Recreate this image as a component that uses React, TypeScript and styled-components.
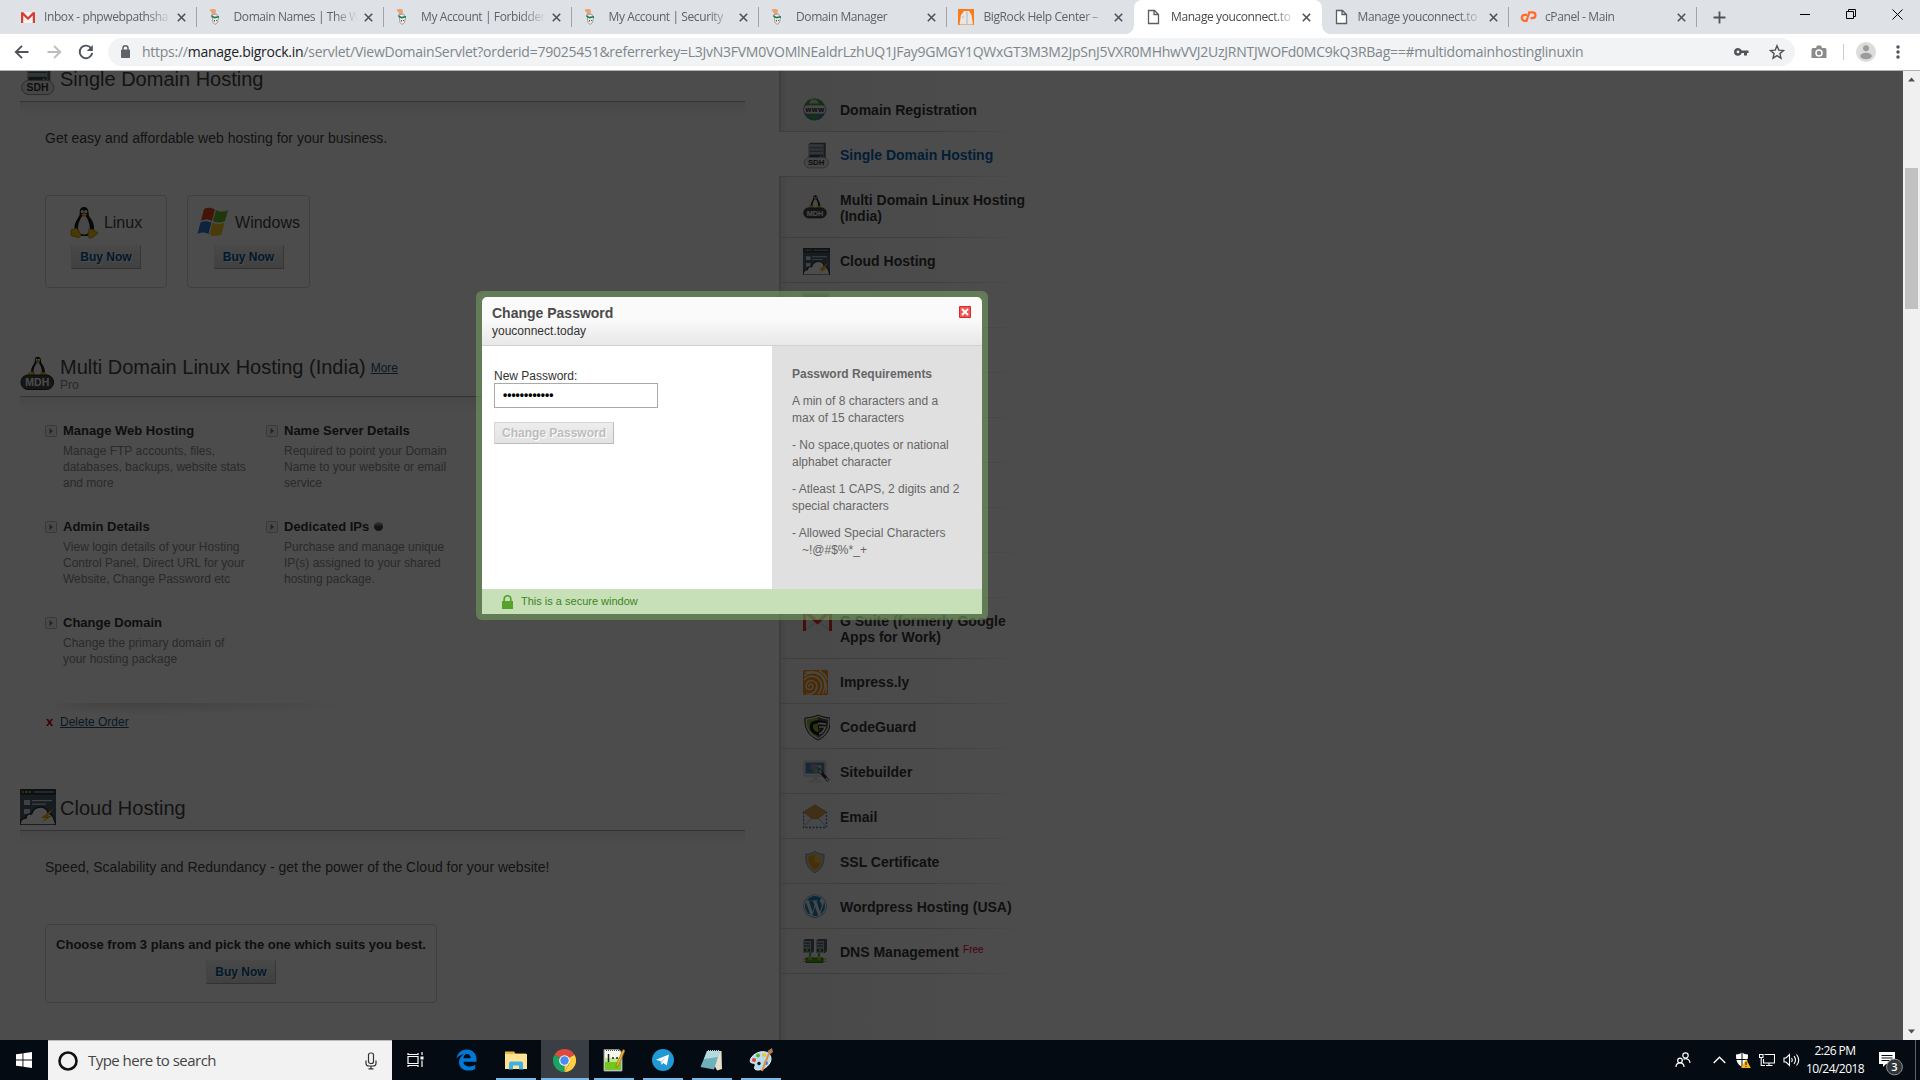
import React from "react";
import styled, { createGlobalStyle, css } from "styled-components";
import { FaWordpress } from "react-icons/fa";

const ARIAL = `"Liberation Sans", Arial, sans-serif`;
const SEGOE = `"Open Sans", "Noto Sans", sans-serif`;

const GlobalStyle = createGlobalStyle`
  * { box-sizing: border-box; }
  body { margin: 0; overflow: hidden; font-family: ${ARIAL}; }
  p, h1, h2, h3 { margin: 0; font-weight: normal; }
  svg { display: block; flex: none; }
`;

const Screen = styled.div`
  position: relative;
  display: flex;
  flex-direction: column;
  width: 1920px;
  height: 1080px;
  overflow: hidden;
  background: #fff;
`;

/* ---------- browser chrome ---------- */
const TabStrip = styled.div`
  display: flex;
  height: 34px;
  padding-left: 9px;
  background: #dee1e6;
  font: 12px ${SEGOE};
  color: #5f6368;
`;

const Tab = styled.div<{ $active?: boolean; $line?: boolean }>`
  position: relative;
  display: flex;
  align-items: center;
  width: 187.5px;
  height: 34px;
  padding: 0 11px 0 11px;
  ${(p) =>
    p.$line &&
    css`
      background: linear-gradient(#a0a3a8, #a0a3a8) right 7px / 1px 20px no-repeat;
    `}
  ${(p) =>
    p.$active &&
    css`
      background: #fff;
      color: #45494d;
      border-radius: 8px 8px 0 0;
      &::before,
      &::after {
        content: "";
        position: absolute;
        bottom: 0;
        width: 8px;
        height: 8px;
      }
      &::before {
        left: -8px;
        background: radial-gradient(circle at 0 0, transparent 7.5px, #fff 8px);
      }
      &::after {
        right: -8px;
        background: radial-gradient(circle at 100% 0, transparent 7.5px, #fff 8px);
      }
    `}
`;

const TabLabel = styled.span<{ $ml: number }>`
  flex: 1;
  min-width: 0;
  margin: 0 6px 0 ${(p) => p.$ml}px;
  line-height: 34px;
  white-space: nowrap;
  letter-spacing: -0.4px;
  mask-image: linear-gradient(90deg, #000 calc(100% - 24px), transparent);
`;

const NewTab = styled.div`
  display: flex;
  align-items: center;
  width: 64px;
  padding-left: 16px;
`;

const WindowButtons = styled.div`
  display: flex;
  margin-left: auto;
`;

const WindowButton = styled.div`
  display: flex;
  justify-content: center;
  width: 46px;
  padding-top: 9px;
`;

const Toolbar = styled.div`
  display: flex;
  align-items: center;
  height: 37px;
  padding: 0 10px 1px 10px;
  border-bottom: 1px solid #b1b4b1;
  background: #fff;
`;

const NavIcons = styled.div`
  display: flex;
  gap: 8px;
  width: 98px;
`;

const Omnibox = styled.div`
  display: flex;
  align-items: center;
  width: 1687px;
  height: 28px;
  padding: 0 10px 0 11px;
  border-radius: 14px;
  background: #f1f3f4;
`;

const Url = styled.div`
  flex: 1;
  margin-left: 10px;
  font: 14px/28px ${SEGOE};
  letter-spacing: -0.255px;
  color: #80868b;
  white-space: nowrap;
  b {
    font-weight: normal;
    color: #202124;
  }
`;

const OmniActions = styled.div`
  display: flex;
  gap: 20px;
`;

const ToolbarActions = styled.div`
  display: flex;
  align-items: center;
  margin-left: auto;
`;

const ToolbarDivider = styled.div`
  width: 1px;
  height: 16px;
  margin: 0 12px 0 16px;
  background: #c8cacc;
`;

/* ---------- page ---------- */
const Viewport = styled.div`
  display: flex;
  height: 969px;
`;

const Page = styled.div`
  position: relative;
  display: flex;
  width: 1903px;
  overflow: hidden;
  background: #fff;
`;

const Shade = styled.div`
  position: absolute;
  inset: 0;
  background: rgba(0, 0, 0, 0.7);
`;

const Main = styled.main`
  width: 779px;
  padding: 0 34px 0 20px;
  color: #444;
`;

const SectionHead = styled.header<{ $mt: number }>`
  display: flex;
  gap: 4px;
  height: 42px;
  margin-top: ${(p) => p.$mt}px;
  border-bottom: 1px solid #aaa;
`;

const HeadShadow = styled.div`
  height: 15px;
  background: linear-gradient(#eee, #fff);
`;

const HeadText = styled.div<{ $pt: number }>`
  padding-top: ${(p) => p.$pt}px;
  white-space: nowrap;
`;

const Heading = styled.h2`
  font-size: 20px;
  line-height: 24px;
  color: #444;
`;

const More = styled.a`
  margin-left: 5px;
  font-size: 12px;
  line-height: 12px;
  color: #1d5579;
  text-decoration: underline;
  vertical-align: 2px;
`;

const Plan = styled.div`
  margin-top: -2px;
  font-size: 12px;
  line-height: 16px;
  color: #888;
`;

const Intro = styled.p`
  margin: 12px 0 48px 25px;
  font-size: 14px;
  line-height: 18px;
`;

const Cards = styled.div`
  display: flex;
  gap: 20px;
  margin-left: 25px;
`;

const Card = styled.div<{ $w: number; $h: number }>`
  display: flex;
  flex-direction: column;
  align-items: center;
  width: ${(p) => p.$w}px;
  height: ${(p) => p.$h}px;
  padding-top: 9px;
  border: 1px solid #d4d4d4;
  border-radius: 4px;
`;

const Os = styled.div`
  display: flex;
  align-items: center;
  gap: 6px;
  height: 33px;
  margin-bottom: 7px;
  padding-top: 3px;
  font-size: 16px;
  svg {
    margin-top: -2px;
  }
`;

const CardText = styled.div`
  height: 26px;
  padding-top: 2px;
  font-size: 13px;
  line-height: 18px;
  font-weight: bold;
  color: #333;
  white-space: nowrap;
`;

const BuyButton = styled.div`
  width: 70px;
  height: 24px;
  border: 1px solid;
  border-color: #f4f4f4 #b5b5b5 #a8a8a8 #e4e4e4;
  background: linear-gradient(#f3f3f3, #d9d9d9);
  color: #065590;
  font-size: 12px;
  font-weight: bold;
  line-height: 22px;
  text-align: center;
  text-shadow: 1px 1px 0 #fff;
`;

const Features = styled.div`
  display: grid;
  grid-template-columns: 221px 221px;
  grid-template-rows: 96px 96px 88px;
  margin: 11px 0 0 25px;
`;

const Feature = styled.div`
  display: flex;
  gap: 6px;
`;

const Arrow = styled.svg`
  margin-top: 2px;
`;

const FeatureTitle = styled.h3`
  display: flex;
  align-items: center;
  gap: 5px;
  margin-bottom: 4px;
  font-size: 13px;
  line-height: 16px;
  font-weight: bold;
  color: #333;
`;

const FeatureText = styled.p`
  font-size: 12px;
  line-height: 16px;
  color: #8c8c8c;
  white-space: pre-line;
`;

const Dot = styled.span`
  width: 9px;
  height: 9px;
  margin-top: -2px;
  border-radius: 50%;
  background: linear-gradient(#bbb, #444 55%);
`;

const FadeRule = styled.div`
  width: 300px;
  height: 11px;
  margin-left: 25px;
  background: radial-gradient(ellipse at 32% 0, #dedede, #fff 75%);
  mask-image: linear-gradient(90deg, transparent, #000 15%);
`;

const DeleteRow = styled.div`
  display: flex;
  gap: 7px;
  margin-left: 26px;
  font-size: 12px;
  line-height: 16px;
  a {
    color: #1d5579;
    text-decoration: underline;
  }
  b {
    width: 7px;
    color: #d00000;
    font-size: 13px;
  }
`;

/* ---------- product sidebar ---------- */
const Sidebar = styled.aside`
  width: 262px;
  background: linear-gradient(90deg, #c8c8c8 0, #e9e9e9 3px, #f3f3f3 8px, #fafafa 100px, #fff 245px);
`;

const SidebarTop = styled.div`
  height: 16px;
`;

const Item = styled.div<{ $h: number; $active?: boolean }>`
  display: flex;
  gap: 10px;
  height: ${(p) => p.$h}px;
  padding: 15px 0 0 24px;
  font-size: 14px;
  line-height: 16px;
  font-weight: bold;
  white-space: pre-line;
  color: ${(p) => (p.$active ? "#0765b0" : "#383838")};
  background:
    linear-gradient(90deg, #cfcfcf 60%, rgba(255, 255, 255, 0)) 0 100% / 245px 1px no-repeat,
    ${(p) => (p.$active ? "#fff" : "transparent")};
  sup {
    margin-left: 4px;
    font-size: 10px;
    line-height: 1px;
    font-weight: normal;
    color: #f00030;
    vertical-align: 4px;
  }
`;

const ItemIcon = styled.div<{ $drop?: number }>`
  width: 27px;
  height: 27px;
  margin-top: ${(p) => -5 + (p.$drop || 0)}px;
`;

/* ---------- scrollbar ---------- */
const Scrollbar = styled.div`
  display: flex;
  flex-direction: column;
  align-items: center;
  justify-content: space-between;
  width: 17px;
  padding: 6px 0;
  background: #f0f0f0;
`;

const Thumb = styled.div`
  width: 13px;
  height: 141px;
  margin: 86px 0 auto;
  background: #c1c1c1;
`;

/* ---------- dialog ---------- */
const Dialog = styled.div`
  position: absolute;
  left: 476px;
  top: 220px;
  width: 512px;
  height: 329px;
  padding: 6px;
  border-radius: 6px;
  background: rgba(115, 152, 95, 0.62);
`;

const DialogHead = styled.div`
  display: flex;
  justify-content: space-between;
  height: 49px;
  padding: 9px 11px 0 10px;
  border-radius: 5px 5px 0 0;
  border-bottom: 1px solid #d2d2d2;
  background: linear-gradient(#fafafa 45%, #e8e8e8);
  color: #333;
`;

const DialogTitle = styled.h1`
  margin-top: -1px;
  font-size: 14px;
  line-height: 16px;
  font-weight: bold;
  color: #4a4a4a;
  height: 18px;
`;

const DialogSub = styled.div`
  font-size: 12px;
  line-height: 16px;
`;

const DialogBody = styled.div`
  display: flex;
  height: 243px;
  background: #fff;
`;

const Form = styled.div`
  width: 290px;
  padding: 22px 0 0 12px;
  font-size: 12px;
  line-height: 16px;
  color: #333;
`;

const PasswordInput = styled.input`
  display: block;
  width: 164px;
  height: 25px;
  margin-top: -1px;
  padding: 0 8px 2px;
  border: 1px solid #aaa;
  outline: none;
  background: #fff;
  color: #000;
  font: bold 12px ${ARIAL};
`;

const SubmitButton = styled.div`
  width: 120px;
  height: 22px;
  margin-top: 14px;
  border: 1px solid;
  border-color: #d6d6d6 #bcbcbc #bcbcbc #d6d6d6;
  background: linear-gradient(#ededed, #e2e2e2);
  color: #bdbdbd;
  font-weight: bold;
  line-height: 20px;
  text-align: center;
  text-shadow: 1px 1px 0 #fff;
`;

const Rules = styled.div`
  width: 210px;
  padding: 20px 0 0 20px;
  background: #e0e0e0;
  font-size: 12px;
  line-height: 17px;
  color: #666;
  white-space: pre;
`;

const RulesTitle = styled.div`
  margin-bottom: 10px;
  font-weight: bold;
`;

const Rule = styled.p`
  margin-bottom: 10px;
`;

const Indent = styled.span`
  padding-left: 10px;
`;

const SecureBar = styled.div`
  display: flex;
  align-items: center;
  gap: 8px;
  height: 25px;
  padding-left: 20px;
  background: #c7e0b8;
  color: #3c851d;
  font-size: 11px;
  span {
    margin-top: -1px;
  }
`;

/* ---------- taskbar ---------- */
const Taskbar = styled.div`
  display: flex;
  height: 40px;
  background: #050b12;
  font-family: ${SEGOE};
`;

const TaskButton = styled.div<{ $gap?: number; $running?: boolean; $focus?: boolean }>`
  display: flex;
  align-items: center;
  justify-content: center;
  width: 48px;
  height: 40px;
  margin-left: ${(p) => p.$gap || 0}px;
  padding-right: 1px;
  background:
    linear-gradient(#76b9ed, #76b9ed) 50% 100% / ${(p) => (p.$focus ? 48 : p.$running ? 40 : 0)}px 2px no-repeat,
    ${(p) => (p.$focus ? "#3a3f45" : "transparent")};
`;

const SearchBox = styled.div`
  display: flex;
  align-items: center;
  width: 344px;
  padding: 0 15px 0 10px;
  border-top: 1px solid #bdbdbd;
  background: #f2f2f2;
  color: #444;
  font-size: 15px;
  letter-spacing: -0.53px;
  span {
    flex: 1;
    margin: -2px 0 0 10px;
  }
`;

const Tray = styled.div`
  display: flex;
  margin-left: auto;
  padding-right: 4px;
`;

const TrayItem = styled.div<{ $w: number; $mr?: number }>`
  display: flex;
  align-items: center;
  justify-content: center;
  width: ${(p) => p.$w}px;
  margin-right: ${(p) => p.$mr || 0}px;
`;

const Clock = styled.div`
  width: 64px;
  padding-top: 2px;
  color: #fff;
  font-size: 12px;
  line-height: 18px;
  letter-spacing: -0.55px;
  text-align: center;
  white-space: nowrap;
`;

const ShowDesktop = styled.div`
  width: 1px;
  margin-left: 8px;
  background: #5d6268;
`;

/* ---------- drawings ---------- */
const CloseX = () => (
  <svg width="9" height="9" viewBox="0 0 9 9" stroke="#4f5357" strokeWidth="1.6">
    <path d="M.8 .8 8.2 8.2M8.2 .8 .8 8.2" />
  </svg>
);

const GmailIcon = () => (
  <svg width="16" height="16" viewBox="0 0 16 16">
    <path d="M2 3h12v11H2z" fill="#f3f3f3" />
    <path d="M1 14V3.6L3 3l5 5 5-5 2 .6V14h-2.2V6.6L8 11 3.200 6.600V14z" fill="#d93c2f" />
  </svg>
);

const RockIcon = () => (
  <svg width="16" height="16" viewBox="0 0 16 16">
    <path d="M1.500 1c1.500-1.300 5-1.300 6.500 0l-.6 4.500H4.500L3.500 3.500z" fill="#eea074" />
    <path d="M4 5.500 8.500 5l2 3.500-1 5-2.500 2-2-2z" fill="#eeeae4" stroke="#8d8d88" strokeWidth=".8" />
    <path d="M3 6 6.500 7.800l4.500-.8v1.600l-4.500 1-3-1.600z" fill="#187b4b" />
    <path d="M6.500 11v1.500m2-1.500v1" stroke="#555" />
  </svg>
);

const HelpIcon = () => (
  <svg width="16" height="16" viewBox="0 0 16 16">
    <path d="M0 0h16v16H0z" fill="#f97c1a" />
    <path d="M1.500 15.500 3 6l3-4h5l2.500 4 1.500 9.500z" fill="#e6e6e6" />
    <path d="M9 2.500V15M5 7v2" stroke="#b5b5b5" />
  </svg>
);

const FileIcon = () => (
  <svg width="16" height="16" viewBox="0 0 16 16" fill="#fff" stroke="#5a5e62" strokeWidth="1.300">
    <path d="M3.500 1.500h6l4 4v9h-10zM9 1.500V5.500h4.500" />
  </svg>
);

const CpanelIcon = () => (
  <svg width="17" height="16" viewBox="0 0 17 16" fill="none" stroke="#ff6c2c" strokeWidth="2.300">
    <path d="M7 5.800H4.800a3 3 0 0 0 0 6h1.700l2.800-8.500h3.200a2.800 2.800 0 0 1 0 5.900H10.500" />
  </svg>
);

const ServerBox = ({ x, y, w, h }: { x: number; y: number; w: number; h: number }) => (
  <g>
    <path d={`M${x} ${y + 2}l2-2h${w - 2}v${h - 2}l-2 2h-${w - 2}z`} fill="#56626b" />
    <path d={`M${x} ${y + 2}h${w - 3}v${h - 2}h-${w - 3}z`} fill="#aab5bb" />
    <path d={`M${x + 1} ${y + h * 0.3}h${w - 5}M${x + 1} ${y + h * 0.5}h${w - 5}`} stroke="#3c474e" />
    <path d={`M${x + 1} ${y + h * 0.7}h${w - 5}v${h * 0.2}h-${w - 5}z`} fill="#34444b" />
    <circle cx={x + w - 7} cy={y + h * 0.8} r="1.300" fill="#77d62c" />
  </g>
);

const SdhIcon = ({ size = 27 }: { size?: number }) => (
  <svg width={size} height={size} viewBox="0 0 36 38">
    <ServerBox x={7} y={1} w={24} h={24} />
    <rect x=".7" y="21.500" width="34" height="15" rx="7.500" fill="#e9e9e9" stroke="#8d8d8d" />
    <text x="17.500" y="33" textAnchor="middle" fontFamily={ARIAL} fontWeight="bold" fontSize="11" fill="#333">SDH</text>
  </svg>
);

const Tux = () => (
  <g>
    <path d="M14 1c-3 0-4.500 2-4.300 5 .2 3-.5 4-2.400 7C5 17 4 20 4.500 24l5 6h9l5.500-6c.5-5-1-8-3.200-11.500C18.600 9.500 18.700 9 18.500 6 18.300 3 17 1 14 1z" fill="#1c1c1c" />
    <path d="M14 9.500c-2 .3-3 2-4 4.500-1.500 3-2.500 6-1.700 10 1 3 3 4.500 5.700 4.500s5-1.500 5.600-4.500c.7-4-.4-7-1.700-10-1-2.500-2-4.300-3.900-4.500z" fill="#f0f0f0" />
    <circle cx="12.300" cy="5.500" r="1.500" fill="#fff" />
    <circle cx="15.800" cy="5.500" r="1.500" fill="#fff" />
    <path d="M11 8.500l3-1.800 3.300 1.600-3 2.600z" fill="#f5b800" />
    <path d="M1 24l5.500-2 4.500 6.500c0 3-2.500 3.500-4.500 2.700L1 29.500zM19 23l4 .5 5 3.500-5.500 4.500c-2.500 1-4.500.5-4.500-2z" fill="#f2c30f" stroke="#b77a08" strokeWidth=".8" />
  </g>
);

const TuxIcon = () => (
  <svg width="28" height="33" viewBox="0 0 28 33"><Tux /></svg>
);

const MdhIcon = ({ size = 27 }: { size?: number }) => (
  <svg width={size} height={size} viewBox="0 0 36 36">
    <g transform="translate(8 1) scale(.7)"><Tux /></g>
    <rect x="1" y="20" width="32.500" height="14.500" rx="7" fill="#4a4a4a" stroke="#222" />
    <text x="17.300" y="31.300" textAnchor="middle" fontFamily={ARIAL} fontWeight="bold" fontSize="10.500" fill="#fff">MDH</text>
  </svg>
);

const CloudIcon = ({ size = 27 }: { size?: number }) => (
  <svg width={size} height={size} viewBox="0 0 36 36">
    <path d="M0 0h36v36H0z" fill="#4c5e6c" />
    <path d="M0 0h36v6H0z" fill="#30363c" />
    <path d="M2 2h2v2H2z" fill="#e65c50" /><path d="M5.500 2h2v2h-2z" fill="#eab850" /><path d="M9 2h2v2H9z" fill="#6abf59" />
    <path d="M14 2h20v2H14z" fill="#788" />
    <path d="M4 11h6v5H4zM4 20h6v5H4zM12 11h20v1.300H12zM12 14.500h14v1.300H12z" fill="#d2dbe2" />
    <path d="M0 36c0-5 3-7 6-7 0-3 3-5 5.500-4C13 20 17 18 21 18s7 3 7 6c3 0 6 4 8 12z" fill="#fff" stroke="#25313a" strokeWidth="1.500" />
    <path d="M34 19 21 29h5l-5 5 11-7h-4z" fill="#f6a800" />
  </svg>
);

const WindowsFlag = () => (
  <svg width="32" height="30" viewBox="0 0 32 30">
    <path d="M7 2c4-2 7-1.500 11 .5L15 14c-4-2-7-2-11 0z" fill="#e2471d" />
    <path d="M19 3c4 2 8 2 12 0l-3 11c-4 2-8 2-12 0z" fill="#6db92b" />
    <path d="M3.500 15.500c4-2 7-1.500 11 0L11.500 27c-4-2-7-2-11 0z" fill="#2a7bd0" />
    <path d="M15.500 15.500c4 2 8 2 12 0l-3 12c-4 2-8 2-12 0z" fill="#f5c52b" />
  </svg>
);

const Icon27: React.FC<{ children: React.ReactNode }> = ({ children }) => (
  <svg width="27" height="27" viewBox="0 0 27 27">{children}</svg>
);

const GlobeIcon = () => (
  <Icon27>
    <circle cx="11.500" cy="12.500" r="11" fill="#3f7dad" />
    <path d="M2 7.500C5 1.500 10 1.500 14 2c4 1 6 4 7 6.500zM3 18h13l-2 4-4 1z" fill="#48a334" />
    <path d="M8 2.500h5l3 4H6z" fill="#c3e2b8" />
    <rect x=".5" y="8" width="22.500" height="9" rx="4" fill="#eee" stroke="#777" strokeWidth=".7" />
    <text x="12" y="15" textAnchor="middle" fontFamily={ARIAL} fontWeight="bold" fontSize="7.500" letterSpacing=".5" fill="#222">www</text>
  </Icon27>
);

const RackIcon = () => (
  <Icon27>
    <path d="M0 0h26v24H0z" fill="#b4b4ae" />
    <path d="M1 3h24M1 7h24M1 11h24" stroke="#666" />
  </Icon27>
);

const GSuiteIcon = () => (
  <svg width="29" height="27" viewBox="0 0 29 27">
    <path d="M2 2h25v21H2z" fill="#f1f1f1" />
    <path d="M2 22 14.500 13 27 22" fill="none" stroke="#ccc" />
    <path d="M0 23V3l3-1 11.500 10L26 2l3 1v20h-3V6.500L14.500 16.500 3 6.500v16.500z" fill="#e2342c" />
  </svg>
);

const ImpressIcon = () => (
  <Icon27>
    <rect y="1" width="25" height="25" rx="1.500" fill="#f59218" />
    <g fill="none" stroke="#fff0dc" strokeWidth="1.400">
      <path d="M6 18c-1-2 2-4 3.500-2s-.5 5-3.500 4.500c-4-.7-4-7 .5-8.500s8.500 2 7 7.500-6 6-10 5.500" />
      <path d="M1 11c4-5 12-5 15.500 0s2 10-1.500 14M1 7c6-5 14-4 18 1s3 12 .5 17M2 3.500c8-2 15-1 19 6s2 12 1.500 15M16 1.500c4 2 7 5 8 9" />
    </g>
  </Icon27>
);

const CodeGuardIcon = () => (
  <Icon27>
    <path d="M2 4c5-.5 9-1 13-3 4 2 8 2.500 12 3 1 9-2 18-12 22C5 22 1 13 2 4z" fill="#ddd" stroke="#222" />
    <path d="M4 5.500c4-.5 7-.8 11-2.500v21C7 20 3 13 4 5.500z" fill="#84b52d" />
    <path d="M15 3c4 1.700 6 2 10 2.500.500 8-2 14-10 18.500z" fill="#555" />
    <path d="M23 9.500c-5-2-10-3-14 0-2 6 1 9 6 10.500 3-1 5.500-3 6-7h-6" fill="none" stroke="#111" strokeWidth="3" />
    <path d="M15 9.500c3-.3 5-.3 8 .8M16 13h6c-1 4-3 6-6 7" fill="none" stroke="#eee" strokeWidth="1.700" />
  </Icon27>
);

const SitebuilderIcon = () => (
  <Icon27>
    <rect x="1" y="2" width="22" height="15" rx="1" fill="#eee" stroke="#aaa" strokeWidth=".6" />
    <path d="M2.500 3.500h19v11h-19z" fill="#4f86ad" />
    <circle cx="11" cy="8" r="3.500" fill="#a58fb5" />
    <circle cx="13" cy="12" r="2.500" fill="#7fb592" />
    <path d="M13 7l5-1 1 4z" fill="#c4d8b0" />
    <path d="M10 17h5v4h-5zM6 21.500h13v2H6z" fill="#ddd" />
    <path d="m17 12 8.500 10" stroke="#333" strokeWidth="3" /><path d="m16.500 11.500 2 2.500m4.500 5 2.500 3" stroke="#eee" strokeWidth="1.500" />
  </Icon27>
);

const EmailIcon = () => (
  <Icon27>
    <path d="M.5 8h23v15.500H.5z" fill="#eef1f5" />
    <path d="M.5 8v15.500h23V8" fill="none" stroke="#4571a8" strokeWidth="1.300" strokeDasharray="2 1.500" />
    <path d="M.5 23l8.500-9h6l8.500 9" fill="none" stroke="#aab" />
    <path d="M.5 8 12 .8 23.500 8 15 14.500H9z" fill="#d5a04c" stroke="#a9772c" strokeWidth=".6" />
  </Icon27>
);

const SslIcon = () => (
  <Icon27>
    <g transform="translate(1 1.500) scale(.95)">
      <path d="M2 4c4 0 7-1 9.500-3C14 3 17 4 21 4c.5 9-1.500 15-9.500 19.500C3.500 19 1.500 13 2 4z" fill="#c9c9c9" stroke="#777" strokeWidth=".8" />
      <path d="M4.500 6c3 0 5-1 7-2.300C13.500 5 15.500 6 18.500 6c.3 7-1.500 11-7 15C6 17 4.200 13 4.500 6z" fill="#e8a51c" />
      <path d="M11.500 3.700C13.500 5 15.500 6 18.500 6c.1 2.500-.2 5-.9 7h-6.100z" fill="#f3c14f" />
    </g>
  </Icon27>
);

const DnsIcon = () => (
  <Icon27>
    <ServerBox x={0} y={0} w={11} h={14} />
    <ServerBox x={13} y={0} w={11} h={14} />
    <path d="M7 14v5M16 14v5" stroke="#555" strokeWidth="1.500" />
    <path d="M0 20h24M0 22.500h24" stroke="#aaa" />
    <path d="M3 19h17v4.500H3z" fill="#4cae17" stroke="#1f5a08" strokeWidth=".8" />
    <path d="M5.500 17h3v4h-3zM14.500 17h3v4h-3z" fill="#a5c82c" />
  </Icon27>
);

const WordpressIcon = () => <FaWordpress size={24} color="#2383bd" />;

const Triangle = ({ down }: { down?: boolean }) => (
  <svg width="7" height="5" viewBox="0 0 7 5" fill="#505050">
    <path d={down ? "M0 .5h7L3.500 4.500z" : "M0 4.500h7L3.500 .5z"} />
  </svg>
);

const WinLogo = () => (
  <svg width="16" height="16" viewBox="0 0 16 16" fill="#fff">
    <path d="M0 2.300 6.500 1.400V7.500H0zM7.400 1.300 16 0v7.500H7.400zM0 8.400h6.500v6.200L0 13.700zM7.400 8.400H16V16l-8.600-1.300z" />
  </svg>
);

const EdgeIcon = () => (
  <svg width="21" height="22" viewBox="0 0 21 22" fill="#0078d7">
    <path d="M.5 9.800C1.200 4.500 4.800.5 10.800.5c6.200 0 9.700 4.500 9.700 9.500v2.700H7.300c.2 3.400 3.300 4.700 6.200 4.700 2.200 0 4.200-.6 5.700-1.600v4.300c-1.800 1-4.100 1.500-6.600 1.500C6.700 21.600 3 18 3 13.200c0-3.600 2-6.500 5-8-3.500.2-6 2-7.500 4.600zM7.400 9.300h7.300c0-2.800-1.300-4.400-3.500-4.400S7.700 6.700 7.400 9.300z" />
  </svg>
);

const ExplorerIcon = () => (
  <svg width="22" height="19" viewBox="0 0 22 19">
    <path d="M0 .5h9l1.500 2H21v4H0z" fill="#e8b84b" />
    <path d="M0 3h22v15H0z" fill="#ffe394" />
    <path d="M4 18.500v-6q0-2 2-2h10q2 0 2 2v6h-4v-4H8v4z" fill="#3fb0e3" />
  </svg>
);

const ChromeIcon = () => (
  <svg width="23" height="23" viewBox="0 0 24 24">
    <path d="M12 12 1.600 6A12 12 0 0 1 22.400 6z" fill="#de4a3d" />
    <path d="M12 12H12L12 24A12 12 0 0 1 1.600 6z" fill="#1ca261" />
    <path d="M12 12 22.400 6A12 12 0 0 1 12 24L17.200 15z" fill="#ffd042" />
    <path d="M12 6.500h10.600L22.400 6 12 5z" fill="#de4a3d" />
    <path d="M17 15 12 24V17z" fill="#ffd042" />
    <circle cx="12" cy="12" r="5.600" fill="#f4f4f4" />
    <circle cx="12" cy="12" r="4.400" fill="#4b8bf4" />
  </svg>
);

const NppIcon = () => (
  <svg width="22" height="24" viewBox="0 0 22 24">
    <path d="M1 1.500h15l3 3V23H1z" fill="#f4f7ee" stroke="#8c8c8c" />
    <path d="M2 13h16v9H2z" fill="#72c81e" />
    <path d="M2 10h16v4H2z" fill="#c2e88f" />
    <path d="M5.500 6v8M9 10h2M13 10h2" stroke="#222" strokeWidth="1.500" />
    <path d="M3 2.500h13" stroke="#555" strokeDasharray="1 1" />
    <path d="m20 1.500 2 1-6.500 15-2.500 2 .3-3z" fill="#eeb42c" stroke="#8b5a13" strokeWidth=".6" />
  </svg>
);

const TelegramIcon = () => (
  <svg width="22" height="22" viewBox="0 0 22 22">
    <circle cx="11" cy="11" r="11" fill="#2199d4" />
    <path d="m4 10.800 13-5.200-2.200 11-3.600-2.700-1.900 1.900-.6-3.500z" fill="#fff" />
    <path d="m8.700 12.300 6-4.500-4.500 5.200-.9 2.500z" fill="#b9d8ea" />
  </svg>
);

const NotepadIcon = () => (
  <svg width="23" height="22" viewBox="0 0 23 22">
    <path d="M7 2h14.500L22 20l-5 1.500z" fill="#e6dfc9" />
    <path d="M7 2h13L14 20.500.5 18z" fill="#6fb0bb" />
    <path d="M7 2h13l-2 6-14 2z" fill="#b4d9de" />
    <path d="M8 1.500h12" stroke="#ccc" strokeDasharray="1 1" />
  </svg>
);

const PaintIcon = () => (
  <svg width="24" height="24" viewBox="0 0 24 24">
    <path d="M11 4c7-1.500 11 2 11 7s-6 11-13 11c-4 0-4-2-3-4s-1-3-3.500-3C-1 13 3 6 11 4z" fill="#b9dbee" stroke="#e6f2f8" />
    <circle cx="5" cy="12" r="2" fill="#e24632" /><circle cx="9" cy="7.500" r="2" fill="#57b23b" />
    <circle cx="15" cy="7" r="2" fill="#f0c42e" /><circle cx="10" cy="15.500" r="1.700" fill="#111a22" />
    <circle cx="17" cy="15" r="2" fill="#3d7fd0" />
    <path d="M20.500 4 13 23" stroke="#e5893b" strokeWidth="2" /><path d="m18.500 3 4.500-3 1 4-3 2.500z" fill="#a97d55" />
  </svg>
);

/* ---------- data ---------- */
const tabs: { label: string; icon: React.ReactNode; ml: number; line?: boolean; active?: boolean }[] = [
  { label: "Inbox - phpwebpathsha", icon: <GmailIcon />, ml: 8, line: true },
  { label: "Domain Names | The W", icon: <RockIcon />, ml: 10, line: true },
  { label: "My Account | Forbidden", icon: <RockIcon />, ml: 10, line: true },
  { label: "My Account | Security", icon: <RockIcon />, ml: 10, line: true },
  { label: "Domain Manager", icon: <RockIcon />, ml: 10, line: true },
  { label: "BigRock Help Center –", icon: <HelpIcon />, ml: 10 },
  { label: "Manage youconnect.to", icon: <FileIcon />, ml: 10, active: true },
  { label: "Manage youconnect.to", icon: <FileIcon />, ml: 9, line: true },
  { label: "cPanel - Main", icon: <CpanelIcon />, ml: 8, line: true },
];

const features: { title: string; text: string; dot?: boolean }[] = [
  { title: "Manage Web Hosting", text: "Manage FTP accounts, files,\ndatabases, backups, website stats\nand more" },
  { title: "Name Server Details", text: "Required to point your Domain\nName to your website or email\nservice" },
  { title: "Admin Details", text: "View login details of your Hosting\nControl Panel, Direct URL for your\nWebsite, Change Password etc" },
  { title: "Dedicated IPs", text: "Purchase and manage unique\nIP(s) assigned to your shared\nhosting package.", dot: true },
  { title: "Change Domain", text: "Change the primary domain of\nyour hosting package" },
];

const products: { label?: string; icon?: React.ReactNode; tall?: boolean; drop?: number; active?: boolean; free?: boolean }[] = [
  { label: "Domain Registration", icon: <GlobeIcon /> },
  { label: "Single Domain Hosting", icon: <SdhIcon />, active: true },
  { label: "Multi Domain Linux Hosting\n(India)", icon: <MdhIcon size={25} />, tall: true, drop: 7 },
  { label: "Cloud Hosting", icon: <CloudIcon /> },
  { icon: <RackIcon /> },
  {}, {}, {}, {}, {}, {},
  { label: "G Suite (formerly Google\nApps for Work)", icon: <GSuiteIcon />, tall: true },
  { label: "Impress.ly", icon: <ImpressIcon /> },
  { label: "CodeGuard", icon: <CodeGuardIcon /> },
  { label: "Sitebuilder", icon: <SitebuilderIcon /> },
  { label: "Email", icon: <EmailIcon /> },
  { label: "SSL Certificate", icon: <SslIcon /> },
  { label: "Wordpress Hosting (USA)", icon: <WordpressIcon /> },
  { label: "DNS Management", icon: <DnsIcon />, free: true },
];

const Browser = () => (
  <>
    <TabStrip>
      {tabs.map((t, i) => (
        <Tab key={i} $active={t.active} $line={t.line}>
          {t.icon}
          <TabLabel $ml={t.ml}>{t.label}</TabLabel>
          <CloseX />
        </Tab>
      ))}
      <NewTab>
        <svg width="13" height="13" viewBox="0 0 13 13" stroke="#4f5357" strokeWidth="1.800"><path d="M6.500 .5v12M.5 6.500h12" /></svg>
      </NewTab>
      <WindowButtons>
        <WindowButton><svg width="10" height="10" viewBox="0 0 10 10"><path d="M0 5.500h10" stroke="#000" /></svg></WindowButton>
        <WindowButton>
          <svg width="10" height="10" viewBox="0 0 10 10" fill="none" stroke="#000"><path d="M.5 2.500h7v7h-7zM2.500 2.500v-2h7v7h-2" /></svg>
        </WindowButton>
        <WindowButton><svg width="11" height="11" viewBox="0 0 11 11" stroke="#000"><path d="M.5 .5l10 10M10.500 .5l-10 10" /></svg></WindowButton>
      </WindowButtons>
    </TabStrip>
    <Toolbar>
      <NavIcons>
        <svg width="24" height="24" viewBox="0 0 24 24" fill="none" stroke="#505458" strokeWidth="1.900"><path d="M18.500 12H6.500M12 5.800 5.800 12l6.200 6.200" /></svg>
        <svg width="24" height="24" viewBox="0 0 24 24" fill="none" stroke="#babcbe" strokeWidth="1.900"><path d="M5.500 12h12M12 5.800l6.200 6.200-6.200 6.200" /></svg>
        <svg width="24" height="24" viewBox="0 0 24 24" fill="none" stroke="#505458" strokeWidth="1.900">
          <path d="M17.300 8.500A6.300 6.300 0 1 0 18.200 13" /><path d="M18.800 5v6h-6z" fill="#505458" stroke="none" />
        </svg>
      </NavIcons>
      <Omnibox>
        <svg width="13" height="14" viewBox="0 0 13 14"><path d="M2.500 5h8v7.500h-8z" fill="#5f6368" stroke="#5f6368" /><path d="M4 5V3.300a2.500 2.500 0 0 1 5 0V5" fill="none" stroke="#5f6368" strokeWidth="1.500" /></svg>
        <Url>https://<b>manage.bigrock.in</b>/servlet/ViewDomainServlet?orderid=79025451&amp;referrerkey=L3JvN3FVM0VOMlNEaldrLzhUQ1JFay9GMGY1QWxGT3M3M2JpSnJ5VXR0MHhwVVJ2UzJRNTJWOFd0MC9kQ3RBag==#multidomainhostinglinuxin</Url>
        <OmniActions>
          <svg width="16" height="16" viewBox="0 0 16 16"><path fillRule="evenodd" fill="#505458" d="M5 4a3.900 3.900 0 1 0 3.700 5H11v2.500h3V9h1.500V6.500H8.700A3.900 3.900 0 0 0 5 4zm0 2.500a1.400 1.400 0 1 1 0 2.800 1.400 1.400 0 0 1 0-2.800z" /></svg>
          <svg width="16" height="16" viewBox="0 0 16 16" fill="none" stroke="#505458" strokeWidth="1.400"><path d="m8 1.700 1.800 4.400 4.700.4-3.600 3.100 1.100 4.600L8 11.700l-4 2.500 1.100-4.600L1.500 6.500l4.700-.4z" /></svg>
        </OmniActions>
      </Omnibox>
      <ToolbarActions>
        <svg width="16" height="16" viewBox="0 0 16 16"><path fill="#8b8b8b" d="M2 4h3l1-2.500h4L11 4h3q1.500 0 1.500 1.500V14H.5V5.500Q.5 4 2 4z" /><circle cx="8" cy="9" r="3" fill="#8b8b8b" stroke="#fff" strokeWidth="1.500" /></svg>
        <ToolbarDivider />
        <svg width="20" height="20" viewBox="0 0 20 20"><circle cx="10" cy="10" r="10" fill="#dcdcdc" /><circle cx="10" cy="6.200" r="3" fill="#9c9c9c" /><ellipse cx="10" cy="14" rx="5.800" ry="3.200" fill="#9c9c9c" /></svg>
        <svg width="34" height="16" viewBox="0 0 34 16" fill="#505458"><circle cx="22" cy="3" r="1.700" /><circle cx="22" cy="8" r="1.700" /><circle cx="22" cy="13" r="1.700" /></svg>
      </ToolbarActions>
    </Toolbar>
  </>
);

const ChangePassword = () => (
  <Dialog>
    <DialogHead>
      <div>
        <DialogTitle>Change Password</DialogTitle>
        <DialogSub>youconnect.today</DialogSub>
      </div>
      <svg width="12" height="12" viewBox="0 0 12 12"><rect width="12" height="12" rx="1" fill="#d9262f" /><rect x="1" y="1" width="10" height="10" fill="#ec5a58" /><path d="m3 3 6 6m0-6-6 6" stroke="#fff" strokeWidth="1.800" /></svg>
    </DialogHead>
    <DialogBody>
      <Form>
        New Password:
        <PasswordInput readOnly value="••••••••••••" />
        <SubmitButton>Change Password</SubmitButton>
      </Form>
      <Rules>
        <RulesTitle>Password Requirements</RulesTitle>
        <Rule>{"A min of 8 characters and a\nmax of 15 characters"}</Rule>
        <Rule>{"- No space,quotes or national\nalphabet character"}</Rule>
        <Rule>{"- Atleast 1 CAPS, 2 digits and 2\nspecial characters"}</Rule>
        <Rule>{"- Allowed Special Characters\n"}<Indent>{"~!@#$%*_+"}</Indent></Rule>
      </Rules>
    </DialogBody>
    <SecureBar>
      <svg width="11" height="14" viewBox="0 0 11 14"><path d="M0 6h11v8H0z" fill="#55a32b" /><path d="M2.200 6.500V4a3.300 3.300 0 0 1 6.600 0v2.500" fill="none" stroke="#55a32b" strokeWidth="1.700" /></svg>
      <span>This is a secure window</span>
    </SecureBar>
  </Dialog>
);

const Desktop = () => (
  <Taskbar>
    <TaskButton><WinLogo /></TaskButton>
    <SearchBox>
      <svg width="20" height="20" viewBox="0 0 20 20"><circle cx="10" cy="10" r="8.500" fill="none" stroke="#111" strokeWidth="2.600" /></svg>
      <span>Type here to search</span>
      <svg width="12" height="18" viewBox="0 0 12 18" fill="none" stroke="#333" strokeWidth="1.200"><rect x="3.500" y="1" width="5" height="10.500" rx="2" /><path d="M1 8.500v3q0 2.500 3 2.500h4q3 0 3-2.500v-3M6 14v2.500M3.500 16.800h5" /></svg>
    </SearchBox>
    <TaskButton>
      <svg width="17" height="16" viewBox="0 0 17 16" fill="none" stroke="#fff" strokeWidth="1.200"><path d="M1 4.500h10v7H1zM1 1v1.500h10V1M1 15v-1.500h10V15M15 0v3M15 8.500V15" /><path d="M13.500 4.500h3v3h-3z" fill="#fff" stroke="none" /></svg>
    </TaskButton>
    <TaskButton $gap={3}><EdgeIcon /></TaskButton>
    <TaskButton $gap={1} $running><ExplorerIcon /></TaskButton>
    <TaskButton $gap={1} $focus><ChromeIcon /></TaskButton>
    <TaskButton $gap={1} $running><NppIcon /></TaskButton>
    <TaskButton $gap={1} $running><TelegramIcon /></TaskButton>
    <TaskButton $gap={1} $running><NotepadIcon /></TaskButton>
    <TaskButton $gap={1} $running><PaintIcon /></TaskButton>
    <Tray>
      <TrayItem $w={24} $mr={12}>
        <svg width="16" height="16" viewBox="0 0 16 16" fill="none" stroke="#fff" strokeWidth="1.200"><circle cx="10.500" cy="3.500" r="2.700" /><circle cx="5" cy="8.500" r="2.300" /><path d="M1 15c0-5.500 8-5.500 8 0M8.500 7.200c3-1.700 6.500.3 6.500 3.800" /></svg>
      </TrayItem>
      <TrayItem $w={24}>
        <svg width="13" height="8" viewBox="0 0 13 8" fill="none" stroke="#fff" strokeWidth="1.400"><path d="m.7 7 5.800-5.700L12.300 7" /></svg>
      </TrayItem>
      <TrayItem $w={24}>
        <svg width="16" height="16" viewBox="0 0 16 16"><path d="M1 2.500Q4.500 2.500 7 .5q2.500 2 6 2c0 6-1 9.500-6 12.500C2 12 1 8.500 1 2.500z" fill="#fff" /><path d="M7 0v15M0 7.500h14" stroke="#050b12" /><path d="M11 7l4.800 9H6.200z" fill="#fbb80f" /><path d="M11 10v3M11 14v1" stroke="#222" strokeWidth="1.200" /></svg>
      </TrayItem>
      <TrayItem $w={24}>
        <svg width="16" height="14" viewBox="0 0 16 14" fill="none" stroke="#fff" strokeWidth="1.100"><path d="M5.500 1.500h10v8.500h-11V6M.5 1.500h3.500v3H.5zM2.200 5v7.500H6M7 12.500h6.500M10 10v2.500" /></svg>
      </TrayItem>
      <TrayItem $w={24}>
        <svg width="17" height="14" viewBox="0 0 17 14" fill="none" stroke="#fff" strokeWidth="1.100"><path d="M1 5h2l3.500-3.500v11L3 9H1zM8.500 5q1.500 2 0 4M11 3.200q3 3.800 0 7.600M13.500 1.500q4.500 5.500 0 11" /></svg>
      </TrayItem>
      <Clock>2:26 PM<br />10/24/2018</Clock>
      <TrayItem $w={40}>
        <svg width="32" height="32" viewBox="0 0 32 32">
          <path d="M8 8h16v12h-9l-3 3v-3H8z" fill="#fff" /><path d="M10.500 11.500h11M10.500 14h11M10.500 16.500h8" stroke="#050b12" />
          <circle cx="23.500" cy="23" r="7.900" fill="#31363b" stroke="#8b8e91" />
          <text x="23.500" y="27" textAnchor="middle" fontFamily={SEGOE} fontSize="11" fontWeight="600" fill="#fff">3</text>
        </svg>
      </TrayItem>
      <ShowDesktop />
    </Tray>
  </Taskbar>
);

export default function App() {
  return (
    <Screen>
      <GlobalStyle />
      <Browser />
      <Viewport>
        <Page>
          <Main>
            <SectionHead $mt={-11}>
              <SdhIcon size={36} />
              <HeadText $pt={7}><Heading>Single Domain Hosting</Heading></HeadText>
            </SectionHead>
            <HeadShadow />
            <Intro>Get easy and affordable web hosting for your business.</Intro>
            <Cards>
              <Card $w={122} $h={93}>
                <Os><TuxIcon />Linux</Os>
                <BuyButton>Buy Now</BuyButton>
              </Card>
              <Card $w={123} $h={93}>
                <Os><WindowsFlag />Windows</Os>
                <BuyButton>Buy Now</BuyButton>
              </Card>
            </Cards>

            <SectionHead $mt={67}>
              <MdhIcon size={36} />
              <HeadText $pt={0}>
                <Heading>Multi Domain Linux Hosting (India)<More>More</More></Heading>
                <Plan>Pro</Plan>
              </HeadText>
            </SectionHead>
            <HeadShadow />
            <Features>
              {features.map((f) => (
                <Feature key={f.title}>
                  <Arrow width="12" height="12" viewBox="0 0 12 12"><rect x=".5" y=".5" width="11" height="11" rx="1" fill="#f3f3f3" stroke="#bdbdbd" /><path d="M4.500 3 8 6 4.500 9z" fill="#777" /></Arrow>
                  <div>
                    <FeatureTitle>{f.title}{f.dot && <Dot />}</FeatureTitle>
                    <FeatureText>{f.text}</FeatureText>
                  </div>
                </Feature>
              ))}
            </Features>
            <FadeRule />
            <DeleteRow><b>x</b><a>Delete Order</a></DeleteRow>

            <SectionHead $mt={59}>
              <CloudIcon size={36} />
              <HeadText $pt={7}><Heading>Cloud Hosting</Heading></HeadText>
            </SectionHead>
            <HeadShadow />
            <Intro>Speed, Scalability and Redundancy - get the power of the Cloud for your website!</Intro>
            <Cards>
              <Card $w={392} $h={79}>
                <CardText>Choose from 3 plans and pick the one which suits you best.</CardText>
                <BuyButton>Buy Now</BuyButton>
              </Card>
            </Cards>
          </Main>
          <Sidebar>
            <SidebarTop />
            {products.map((p, i) => (
              <Item key={i} $h={p.tall ? 61 : 45} $active={p.active}>
                <ItemIcon $drop={p.drop}>{p.icon}</ItemIcon>
                <div>{p.label}{p.free && <sup>Free</sup>}</div>
              </Item>
            ))}
          </Sidebar>
          <Shade />
          <ChangePassword />
        </Page>
        <Scrollbar>
          <Triangle />
          <Thumb />
          <Triangle down />
        </Scrollbar>
      </Viewport>
      <Desktop />
    </Screen>
  );
}
